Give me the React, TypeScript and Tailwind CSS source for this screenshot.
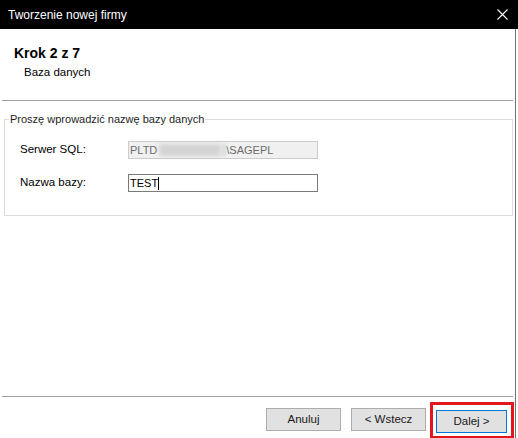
import React from "react"

const font = { fontFamily: '"Liberation Sans", Arial, sans-serif' }

function WinButton({ label, focused }: { label: string; focused?: boolean }) {
  return (
    <button
      className={
        "h-[23px] text-[11.5px] text-[#1a1a1a] bg-[#e1e1e1] border " +
        (focused ? "w-[71px] border-[#0078d7]" : "w-[75px] border-[#adadad]")
      }
    >
      {label}
    </button>
  )
}

export default function App() {
  return (
    <div className="w-[518px] h-[438px] bg-white flex flex-col overflow-hidden" style={font}>
      {/* Pasek tytułu */}
      <div className="h-[29px] bg-black flex items-center justify-between pl-[8px] pr-[10px] shrink-0">
        <span className="text-white text-[12px]">Tworzenie nowej firmy</span>
        <svg width="11" height="11" viewBox="0 0 11 11">
          <path d="M0.5 0.5 L10.5 10.5 M10.5 0.5 L0.5 10.5" stroke="#ffffff" strokeWidth="1.1" />
        </svg>
      </div>

      <div className="flex flex-1">
        <div className="w-[516px] flex flex-col border-r border-[#707070]">
          {/* Nagłówek kroku */}
          <div className="h-[71px] pl-[14px] pt-[16px] shrink-0">
            <p className="text-[14px] font-bold text-black leading-[17px]">Krok 2 z 7</p>
            <p className="text-[11.5px] text-black leading-[16px] pl-[10px] mt-[2px]">Baza danych</p>
          </div>
          <div className="h-px bg-[#a0a0a0] mx-[2px]" />

          {/* Grupa */}
          <fieldset className="mt-[10px] ml-[4px] mr-[2px] h-[105px] border border-[#dcdcdc] px-[15px]">
            <legend className="text-[11px] text-[#1e1e1e] ml-[-11px] px-[1px] leading-[16px]">
              Proszę wprowadzić nazwę bazy danych
            </legend>
            <div className="flex items-center mt-[14px]">
              <span className="w-[108px] text-[11.5px] text-black">Serwer SQL:</span>
              <div className="w-[190px] h-[18px] bg-[#f0f0f0] border border-[#cccccc] flex items-center pl-[1px] text-[11px] text-[#6d6d6d]">
                <span>PLTD</span>
                <span className="inline-block w-[62px] h-[12px] bg-[#d4d4d4] blur-[2px] ml-[2px] mr-[1px]" />
                <span className="inline-block w-[4px] h-[12px] bg-[#dcdcdc] blur-[1px]" />
                <span>\SAGEPL</span>
              </div>
            </div>
            <div className="flex items-center mt-[15px]">
              <span className="w-[108px] text-[11.5px] text-black">Nazwa bazy:</span>
              <div className="w-[190px] h-[18px] bg-white border border-[#7a7a7a] flex items-center pl-[1px] text-[11px] text-black">
                <span>TEST</span>
                <span className="inline-block w-px h-[13px] bg-black" />
              </div>
            </div>
          </fieldset>

          <div className="flex-1" />

          {/* Stopka */}
          <div className="h-px bg-[#a0a0a0] mx-[2px]" />
          <div className="h-[41px] flex items-start pt-[11px] pl-[266px] gap-[10px]">
            <WinButton label="Anuluj" />
            <WinButton label="< Wstecz" />
            <div className="relative">
              <WinButton label="Dalej >" focused />
              <div className="absolute -left-[6px] -right-[7px] -top-[6px] -bottom-[6px] border-[3px] border-[#e3161e]" />
            </div>
          </div>
        </div>
      </div>
    </div>
  )
}
